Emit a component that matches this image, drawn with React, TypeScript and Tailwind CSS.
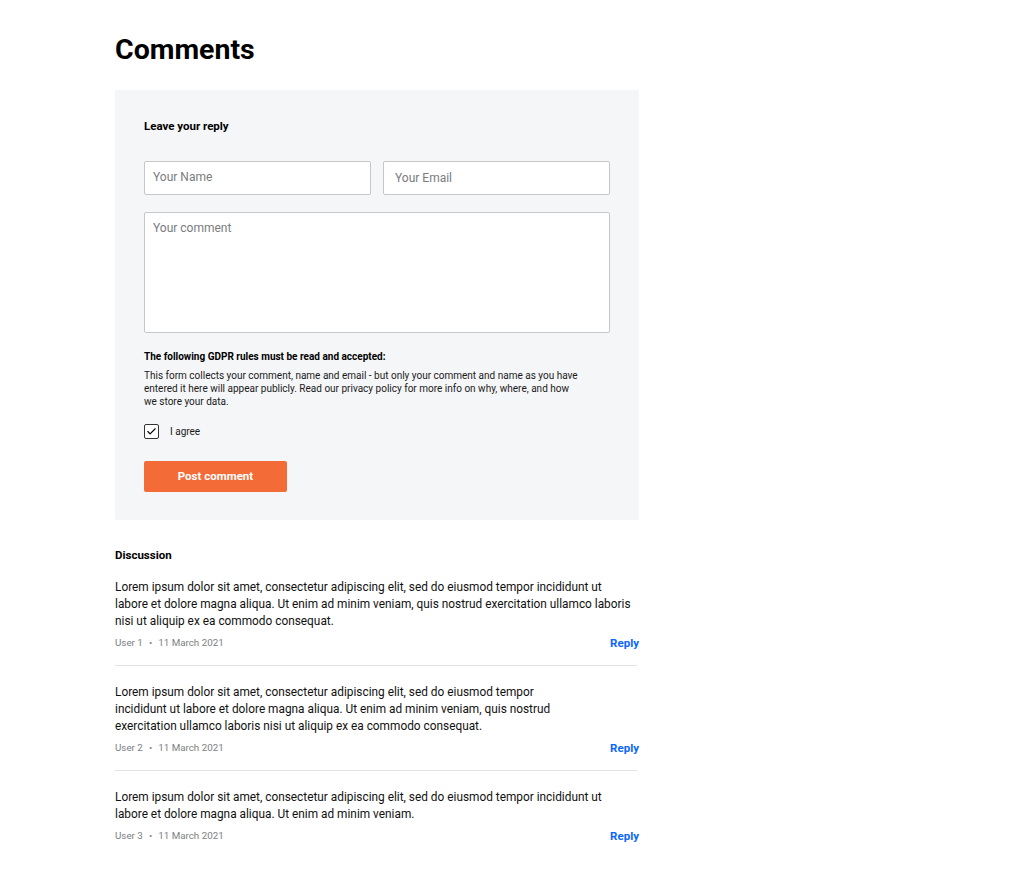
import { Check } from 'lucide-react';

const comments = [
  {
    id: 1,
    user: 'User 1',
    date: '11 March 2021',
    width: 'max-w-[520px]',
    text: 'Lorem ipsum dolor sit amet, consectetur adipiscing elit, sed do eiusmod tempor incididunt ut labore et dolore magna aliqua. Ut enim ad minim veniam, quis nostrud exercitation ullamco laboris nisi ut aliquip ex ea commodo consequat.',
  },
  {
    id: 2,
    user: 'User 2',
    date: '11 March 2021',
    width: 'max-w-[450px]',
    text: 'Lorem ipsum dolor sit amet, consectetur adipiscing elit, sed do eiusmod tempor incididunt ut labore et dolore magna aliqua. Ut enim ad minim veniam, quis nostrud exercitation ullamco laboris nisi ut aliquip ex ea commodo consequat.',
  },
  {
    id: 3,
    user: 'User 3',
    date: '11 March 2021',
    width: 'max-w-[520px]',
    text: 'Lorem ipsum dolor sit amet, consectetur adipiscing elit, sed do eiusmod tempor incididunt ut labore et dolore magna aliqua. Ut enim ad minim veniam.',
  },
];

export default function App() {
  return (
    <div className="min-h-screen bg-white font-['Roboto','Liberation_Sans',sans-serif] text-black">
      <main className="ml-[115px] w-[524px] pt-[32px] pb-10">
        {/* Title */}
        <h1 className="text-[28.5px] leading-[36px] font-bold mb-[22px]">Comments</h1>

        {/* Reply form */}
        <section className="bg-[#f5f6f8] rounded-[2px] px-[29px] pt-[28px] pb-[28px]">
          <h2 className="text-[11.5px] leading-[16px] font-bold mb-[27px]">Leave your reply</h2>

          <div className="grid grid-cols-2 gap-[12px] mb-[17px]">
            <input
              type="text"
              placeholder="Your Name"
              className="h-[34px] px-[8px] pb-[2px] bg-white border border-[#c6c7c9] rounded-[2px] text-[12px] placeholder:text-[#7a7c80] outline-none"
            />
            <input
              type="email"
              placeholder="Your Email"
              className="h-[34px] px-[11px] bg-white border border-[#c6c7c9] rounded-[2px] text-[12px] placeholder:text-[#7a7c80] outline-none"
            />
          </div>

          <textarea
            placeholder="Your comment"
            className="block w-full h-[121px] px-[8px] py-[8px] bg-white border border-[#c6c7c9] rounded-[2px] text-[12px] leading-[14px] placeholder:text-[#7a7c80] outline-none resize-none"
          />

          {/* GDPR */}
          <p className="mt-[17px] text-[10px] leading-[13px] font-bold">The following GDPR rules must be read and accepted:</p>
          <p className="mt-[6px] max-w-[436px] text-[10px] leading-[13px] text-[#1a1a1a]">
            This form collects your comment, name and email - but only your comment and name as you have entered it here will
            appear publicly. Read our privacy policy for more info on why, where, and how we store your data.
          </p>

          <label className="mt-[16px] flex items-center gap-[11px]">
            <span className="w-[15px] h-[15px] border-[1.5px] border-[#333] rounded-[2px] bg-white flex items-center justify-center">
              <Check className="w-[11px] h-[11px] text-black" strokeWidth={2.5} />
            </span>
            <span className="text-[10px] leading-[14px] text-[#1a1a1a]">I agree</span>
          </label>

          <button className="mt-[22px] w-[143px] h-[31px] bg-[#f36c38] rounded-[2px] text-white text-[11.5px] font-bold">
            Post comment
          </button>
        </section>

        {/* Discussion */}
        <h2 className="mt-[27px] text-[11.5px] leading-[16px] font-bold">Discussion</h2>

        <ul className="mt-[16px]">
          {comments.map((c, i) => (
            <li key={c.id} className={i < comments.length - 1 ? 'border-b border-[#e3e3e3] pb-[15px] mb-[18px] mr-[2px]' : ''}>
              <p className={`${c.width} text-[11.85px] leading-[17px] text-[#111]`}>{c.text}</p>
              <div className="mt-[6px] flex items-center justify-between">
                <span className="text-[9.8px] leading-[14px] text-[#7d7f82]">
                  {c.user}
                  <span className="mx-[6px]">•</span>
                  {c.date}
                </span>
                <button className={`text-[11.5px] leading-[14px] font-bold text-[#0b66ff] ${i < comments.length - 1 ? '-mr-[2px]' : ''}`}>Reply</button>
              </div>
            </li>
          ))}
        </ul>
      </main>
    </div>
  );
}
